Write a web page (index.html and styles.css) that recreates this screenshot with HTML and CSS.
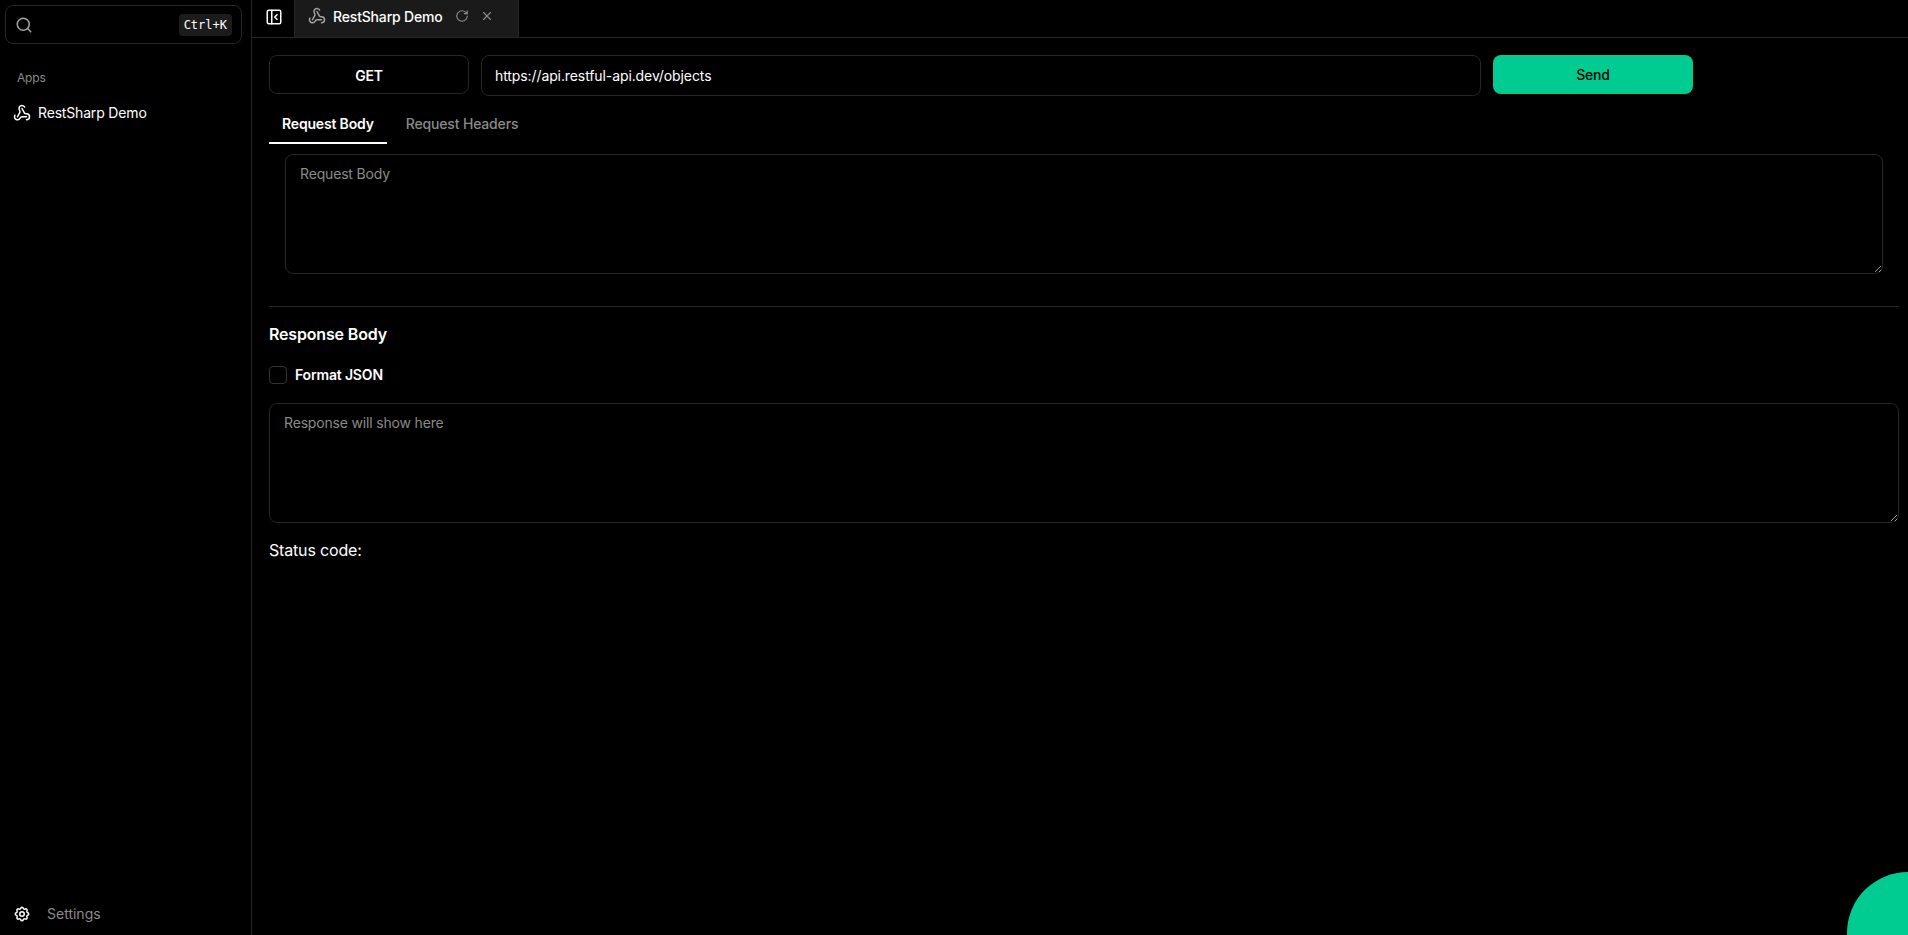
FILE: index.html
```html
<!DOCTYPE html>
<html>
	<head>
		<meta charset="utf-8" lang="en" />
		<title>RestSharp Demo</title>

		<link rel="stylesheet" href="styles.css">
	</head>

	<body>
		<div class="app">
			<aside class="sidebar">
				<div class="search">
					<svg class="icon search-icon" viewBox="0 0 24 24"><circle cx="11" cy="11" r="8"/><path d="m21 21-4.3-4.3"/></svg>
					<kbd class="shortcut">Ctrl+K</kbd>
				</div>
				<div class="nav-title">Apps</div>
				<a class="nav-item">
					<svg class="icon" viewBox="0 0 24 24"><path d="M18 16.98h-5.99c-1.1 0-1.95.94-2.48 1.9A4 4 0 0 1 2 17c.01-.7.2-1.4.57-2"/><path d="m6 17 3.13-5.78c.53-.97.1-2.18-.5-3.1a4 4 0 1 1 6.89-4.06"/><path d="m12 6 3.13 5.73C15.66 12.7 16.9 13 18 13a4 4 0 0 1 0 8"/></svg>
					<span>RestSharp Demo</span>
				</a>
				<a class="settings">
					<svg class="icon" viewBox="0 0 24 24"><path d="M10.325 4.317c.426-1.756 2.924-1.756 3.35 0a1.724 1.724 0 0 0 2.573 1.066c1.543-.94 3.31.826 2.37 2.37a1.724 1.724 0 0 0 1.065 2.572c1.756.426 1.756 2.924 0 3.35a1.724 1.724 0 0 0-1.066 2.573c.94 1.543-.826 3.31-2.37 2.37a1.724 1.724 0 0 0-2.572 1.065c-.426 1.756-2.924 1.756-3.35 0a1.724 1.724 0 0 0-2.573-1.066c-1.543.94-3.31-.826-2.37-2.37a1.724 1.724 0 0 0-1.065-2.572c-1.756-.426-1.756-2.924 0-3.35a1.724 1.724 0 0 0 1.066-2.573c-.94-1.543.826-3.31 2.37-2.37 1 .608 2.296.07 2.572-1.065z"/><circle cx="12" cy="12" r="3"/></svg>
					<span>Settings</span>
				</a>
			</aside>

			<main class="main">
				<div class="tabbar">
					<button class="toggle">
						<svg class="icon" viewBox="0 0 24 24"><rect x="3" y="3" width="18" height="18" rx="2"/><path d="M9 3v18"/><path d="m16 15-3-3 3-3"/></svg>
					</button>
					<div class="tab">
						<svg class="icon tab-icon" viewBox="0 0 24 24"><path d="M18 16.98h-5.99c-1.1 0-1.95.94-2.48 1.9A4 4 0 0 1 2 17c.01-.7.2-1.4.57-2"/><path d="m6 17 3.13-5.78c.53-.97.1-2.18-.5-3.1a4 4 0 1 1 6.89-4.06"/><path d="m12 6 3.13 5.73C15.66 12.7 16.9 13 18 13a4 4 0 0 1 0 8"/></svg>
						<span class="tab-name">RestSharp Demo</span>
						<svg class="icon tab-action" viewBox="0 0 24 24"><path d="M21 12a9 9 0 1 1-9-9c2.52 0 4.93 1 6.74 2.74L21 8"/><path d="M21 3v5h-5"/></svg>
						<svg class="icon tab-action" viewBox="0 0 24 24"><path d="M18 6 6 18"/><path d="m6 6 12 12"/></svg>
					</div>
				</div>

				<div class="content">
					<div class="request-row">
						<button class="method">GET</button>
						<input class="url" type="text" value="https://api.restful-api.dev/objects">
						<button class="send">Send</button>
					</div>

					<div class="tabs">
						<div class="tabs-item active">Request Body</div>
						<div class="tabs-item">Request Headers</div>
					</div>

					<div class="request-panel">
						<textarea class="area" placeholder="Request Body"></textarea>
					</div>

					<hr class="divider">

					<h2 class="heading">Response Body</h2>

					<label class="check">
						<span class="check-box"></span>
						<span>Format JSON</span>
					</label>

					<textarea class="area" placeholder="Response will show here"></textarea>

					<div class="status">Status code:</div>
				</div>
			</main>

			<div class="fab"></div>
		</div>
	</body>
</html>
```

FILE: styles.css
```css
* { box-sizing: border-box; }
body {
	background: #000;
	color: #fff;
	font-family: Inter, "Liberation Sans", sans-serif;
	font-size: 14px;
	letter-spacing: -0.17px;
	margin: 0;
}
.icon {
	fill: none;
	flex: none;
	height: 18px;
	stroke: currentColor;
	stroke-linecap: round;
	stroke-linejoin: round;
	stroke-width: 2;
	width: 18px;
}
button,
input,
textarea {
	font-family: inherit;
	font-size: 14px;
	letter-spacing: inherit;
}


/* Layout */
.app {
	display: flex;
	height: 935px;
	overflow: hidden;
	position: relative;
}
.sidebar {
	border-right: 1px solid #262626;
	display: flex;
	flex: none;
	flex-direction: column;
	padding: 5px 10px 0 5px;
	width: 252px;
}
.main {
	display: flex;
	flex: 1;
	flex-direction: column;
	min-width: 0;
}


/* Sidebar */
.search {
	align-items: center;
	border: 1px solid #262626;
	border-radius: 8px;
	color: #a3a3a3;
	display: flex;
	height: 39px;
	justify-content: space-between;
	padding: 0 9px;
	width: 237px;
}
.shortcut {
	background: #1c1c1c;
	border-radius: 4px;
	color: #fff;
	font-family: "DejaVu Sans Mono", "Liberation Mono", monospace;
	font-size: 12px;
	letter-spacing: 0;
	line-height: 22px;
	padding: 0 5px;
}
.nav-title {
	color: #8a8a8a;
	font-size: 12px;
	line-height: 16px;
	margin: 26px 0 0 12px;
}
.nav-item {
	align-items: center;
	display: flex;
	gap: 7px;
	line-height: 20px;
	margin: 17px 0 0 8px;
}
.settings {
	align-items: center;
	color: #8a8a8a;
	display: flex;
	gap: 16px;
	letter-spacing: 0;
	line-height: 20px;
	margin: auto 0 11px 8px;
}
.settings .icon { color: #fff; }


/* Tab bar */
.tabbar {
	border-bottom: 1px solid #262626;
	display: flex;
	flex: none;
	height: 38px;
}
.toggle {
	align-items: center;
	background: none;
	border: 0;
	border-right: 1px solid #262626;
	color: #fff;
	display: flex;
	justify-content: center;
	padding: 0 0 3px 1px;
	width: 43px;
}
.tab {
	align-items: center;
	background: #1a1a1a;
	border-right: 1px solid #262626;
	display: flex;
	padding: 0 13px 5px;
	width: 224px;
}
.tab-icon { color: #a3a3a3; margin-right: 7px; }
.tab-name { font-weight: 500; margin-right: 12px; white-space: nowrap; }
.tab-action {
	color: #8a8a8a;
	height: 14px;
	margin-right: 11px;
	width: 14px;
}


/* Content */
.content {
	display: flex;
	flex-direction: column;
	padding: 17px 9px 0 17px;
}
.request-row {
	align-items: flex-start;
	display: flex;
	gap: 12px;
}
.method {
	background: none;
	border: 1px solid #262626;
	border-radius: 8px;
	color: #fff;
	font-weight: 600;
	height: 39px;
	padding: 1px 0 0;
	width: 200px;
}
.url {
	background: none;
	border: 1px solid #262626;
	border-radius: 8px;
	color: #fff;
	height: 41px;
	letter-spacing: -0.1px;
	outline: none;
	padding: 0 13px;
	width: 1000px;
}
.send {
	background: #00cc92;
	border: 0;
	border-radius: 8px;
	color: #000;
	font-weight: 500;
	height: 39px;
	padding: 0;
	width: 200px;
}
.tabs {
	display: flex;
	margin-top: 5px;
}
.tabs-item {
	color: #8a8a8a;
	font-weight: 500;
	line-height: 20px;
	padding: 13px 13px 8px;
}
.tabs-item.active {
	border-bottom: 2px solid #fff;
	color: #fff;
	font-weight: 600;
	margin-right: 6px;
}
.request-panel { padding: 10px 16px 0 16px; }
.area {
	background: none;
	border: 1px solid #262626;
	border-radius: 8px;
	color: #fff;
	display: block;
	height: 120px;
	outline: none;
	padding: 10px 14px;
	width: 100%;
}
.area::placeholder { color: #8a8a8a; }
.divider {
	border: 0;
	border-top: 1px solid #262626;
	margin: 32px 0 0;
	width: 100%;
}
.heading {
	font-size: 16px;
	font-weight: 600;
	line-height: 24px;
	margin: 15px 0 0;
}
.check {
	align-items: center;
	display: flex;
	font-weight: 600;
	gap: 8px;
	line-height: 20px;
	margin: 19px 0 18px;
}
.check-box {
	border: 1px solid #333;
	border-radius: 4px;
	height: 18px;
	width: 18px;
}
.status {
	font-size: 16px;
	line-height: 24px;
	margin-top: 15px;
}


/* Floating button */
.fab {
	background: #00cc92;
	border-radius: 50%;
	bottom: -59px;
	height: 122px;
	position: absolute;
	right: -61px;
	width: 122px;
}
```
